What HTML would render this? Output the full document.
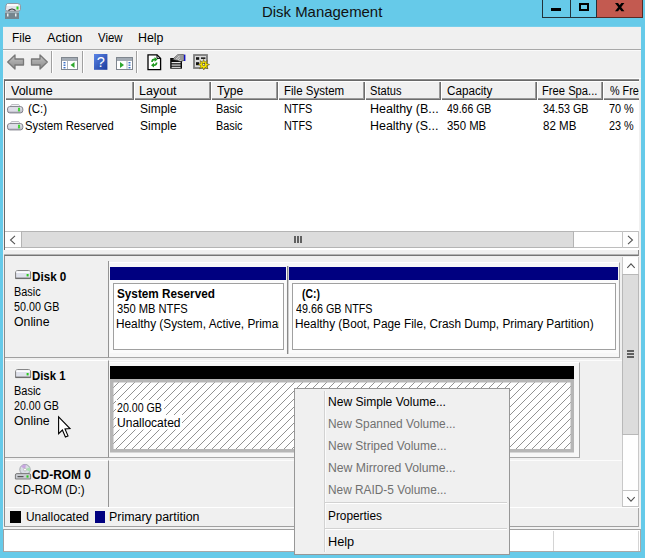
<!DOCTYPE html>
<html><head><meta charset="utf-8"><title>Disk Management</title>
<style>
*{box-sizing:border-box;margin:0;padding:0}
html,body{width:645px;height:558px;overflow:hidden;background:#66CAE9;}
body{position:relative;font-family:"Liberation Sans",sans-serif;font-size:12px;color:#000;}
.a{position:absolute}
.t{position:absolute;white-space:nowrap;transform-origin:0 0;}
.cap{position:absolute;top:0;height:18px;border-left:1px solid #22323a;border-bottom:1px solid #22323a}
.hc{position:absolute;top:81px;height:19px;background:#f0f0f0;border-top:1px solid #fff;border-left:1px solid #fff;box-shadow:inset -1px -1px 0 #6e6e6e,inset -2px -2px 0 #9a9a9a}
.lab{position:absolute;left:5px;width:104px;background:#f0f0f0;border-right:1px solid #949494;border-bottom:1px solid #a0a0a0;border-top:1px solid #fff}
.sep{position:absolute;top:51px;width:2px;height:22px;border-left:1px solid #a0a0a0;border-right:1px solid #fff}
svg{position:absolute;overflow:visible}
</style></head><body>
<!-- title icon -->
<svg style="left:5px;top:3px" width="17" height="17" viewBox="0 0 17 17">
 <rect x="0" y="8" width="14" height="8" fill="#75858e"/><rect x="0" y="8" width="14" height="2" fill="#9fb0b8"/>
 <rect x="2" y="10.5" width="1.5" height="3" fill="#e8eef0"/><rect x="10" y="10.5" width="1.5" height="3" fill="#e8eef0"/>
 <path d="M1 2.5 Q1 0.5 4 0.5 L12 0.5 Q15.5 0.5 15.5 2.5 L15.5 6.5 Q15.5 8 13 8 L3 8 Q0.5 8 0.5 6.5 Z" fill="#e4e4ec" stroke="#8a8a92" stroke-width="0.8"/>
 <rect x="2" y="1" width="11" height="2" fill="#fafafa"/>
 <path d="M3.5 7.5 Q7 4.5 10.5 7.5" fill="none" stroke="#222" stroke-width="1.2"/>
 <rect x="11.5" y="3.5" width="2" height="3" fill="#2fd41f"/>
</svg>
<div class="a" style="left:3px;top:26px;width:638px;height:1px;background:#78cfec"></div>
<!-- caption buttons -->
<div class="cap" style="left:542px;width:28px"></div>
<div class="cap" style="left:570px;width:27px"></div>
<div class="cap" style="left:596px;width:47px;background:#c35a50;border-right:1px solid #5a2a25;border-bottom-color:#5a2a25"></div>
<div class="a" style="left:551px;top:8px;width:10px;height:3px;background:#000"></div>
<div class="a" style="left:579px;top:3px;width:10px;height:8px;border:2px solid #000"></div>
<svg style="left:614.8px;top:2.8px" width="10" height="9" viewBox="0 0 10 9"><path d="M0 0 L3 0 L9.4 8.2 L6.4 8.2 Z M6.4 0 L9.4 0 L3 8.2 L0 8.2 Z" fill="#000"/></svg>

<!-- client -->
<div class="a" style="left:3px;top:27px;width:638px;height:525px;background:#f0f0f0"></div>
<div class="a" style="left:3px;top:49px;width:638px;height:1px;background:#a8a8a8"></div>
<div class="a" style="left:3px;top:50px;width:638px;height:1px;background:#fafafa"></div>
<div class="a" style="left:3px;top:78px;width:638px;height:1px;background:#fdfdfd"></div>

<!-- toolbar -->
<svg style="left:7px;top:54px" width="18" height="16" viewBox="0 0 18 16"><defs><linearGradient id="ag" x1="0" y1="0" x2="0" y2="1"><stop offset="0" stop-color="#c4c4c4"/><stop offset="1" stop-color="#8a8a8a"/></linearGradient></defs><path d="M0.7 8 L8 1 L8 5 L16.5 5 L16.5 11 L8 11 L8 15 Z" fill="url(#ag)" stroke="#787878" stroke-width="1.3" stroke-linejoin="round"/></svg>
<svg style="left:30px;top:54px" width="18" height="16" viewBox="0 0 18 16"><path d="M17.3 8 L10 1 L10 5 L1.5 5 L1.5 11 L10 11 L10 15 Z" fill="url(#ag)" stroke="#787878" stroke-width="1.3" stroke-linejoin="round"/></svg>
<div class="sep" style="left:51px"></div>
<svg style="left:61px;top:57px" width="18" height="13" viewBox="0 0 18 13">
 <rect x="0.5" y="0.5" width="16" height="12" fill="#fff" stroke="#7f868e"/><rect x="1" y="1" width="15" height="3" fill="#a3abb4"/><rect x="6" y="4" width="1" height="8" fill="#b0b6bd"/>
 <rect x="2.5" y="5" width="2" height="1.4" fill="#3a6fc4"/><rect x="2.5" y="7.5" width="2" height="1.4" fill="#3a6fc4"/><rect x="2.5" y="10" width="2" height="1.4" fill="#3a6fc4"/>
 <path d="M9.5 8 L13.5 5 L13.5 11 Z" fill="#2ea82e"/></svg>
<div class="sep" style="left:82px"></div>
<svg style="left:94px;top:54px" width="14" height="16" viewBox="0 0 14 16"><defs><linearGradient id="hg" x1="0" y1="0" x2="1" y2="1"><stop offset="0" stop-color="#5b85e6"/><stop offset="1" stop-color="#1a3a9c"/></linearGradient></defs>
 <rect x="0" y="0" width="13.4" height="15.8" fill="url(#hg)"/><text x="6.7" y="13" font-family="Liberation Sans,sans-serif" font-size="14.5" fill="#fff" text-anchor="middle">?</text></svg>
<svg style="left:116px;top:57px" width="18" height="13" viewBox="0 0 18 13">
 <rect x="0.5" y="0.5" width="16" height="12" fill="#fff" stroke="#7f868e"/><rect x="1" y="1" width="15" height="3" fill="#a3abb4"/><rect x="10.5" y="4" width="1" height="8" fill="#b0b6bd"/>
 <rect x="12.5" y="5" width="2" height="1.4" fill="#3a6fc4"/><rect x="12.5" y="7.5" width="2" height="1.4" fill="#3a6fc4"/><rect x="12.5" y="10" width="2" height="1.4" fill="#3a6fc4"/>
 <path d="M8 8 L4 5 L4 11 Z" fill="#2ea82e"/></svg>
<div class="sep" style="left:136px"></div>
<svg style="left:147px;top:54px" width="15" height="17" viewBox="0 0 15 17">
 <path d="M1 0.8 L10 0.8 L13.6 4.4 L13.6 15.6 L1 15.6 Z" fill="#fff" stroke="#000" stroke-width="1.3"/><path d="M10 0.8 L10 4.4 L13.6 4.4" fill="none" stroke="#000" stroke-width="1"/>
 <path d="M4.2 8 Q4.2 4.6 7.6 4.6 L7.6 3 L10.6 5.4 L7.6 7.8 L7.6 6.2 Q5.8 6.2 5.8 8 Z" fill="#1f9a1f"/>
 <path d="M10.4 8.6 Q10.4 12 7 12 L7 13.6 L4 11.2 L7 8.8 L7 10.4 Q8.8 10.4 8.8 8.6 Z" fill="#1f9a1f"/></svg>
<svg style="left:170px;top:54px" width="17" height="16" viewBox="0 0 17 16">
 <rect x="0.2" y="4" width="11.8" height="10.7" fill="#0a0a0a"/><rect x="1.6" y="8.1" width="9" height="1.1" fill="#fff"/><rect x="1.6" y="10.5" width="9" height="1.1" fill="#fff"/><rect x="1.6" y="12.8" width="9" height="1" fill="#fff"/>
 <path d="M2.6 5.6 L7.6 0.9 L13.6 0.7 L13.8 6.4 L10.2 7.6 L6.4 6.2 Z" fill="#d2d2d2" stroke="#2a2a2a" stroke-width="0.8"/>
 <path d="M5 5 L8.4 1.8 M6.8 5.8 L10 2.4 M8.8 6.6 L11.6 3.2" stroke="#6a6a6a" stroke-width="0.7" fill="none"/>
 <rect x="9.8" y="1.1" width="3.8" height="5" fill="#9a9a9a"/>
 <rect x="14" y="0.6" width="1.4" height="6.4" fill="#1414c4"/></svg>
<svg style="left:193px;top:54px" width="17" height="16" viewBox="0 0 17 16">
 <rect x="1" y="1" width="13" height="13" fill="#dcdcdc" stroke="#7c7c7c" stroke-width="1.8"/>
 <rect x="3" y="3.2" width="3.2" height="2.6" fill="#111"/><rect x="8" y="3.4" width="4.4" height="1.5" fill="#111"/><rect x="3" y="8.2" width="3.2" height="3" fill="#111"/>
 <path d="M10.6 5.4 L11.6 8.2 L14.4 6.6 L13.4 9.4 L16.6 10.6 L13.6 11.8 L15 14.8 L12 13.4 L10.8 16 L9.6 13.4 L6.6 14.8 L8 11.8 L5.2 10.6 L8 9.4 L7 6.6 L9.6 8.2 Z" fill="#f7e600" stroke="#4a4200" stroke-width="0.5"/>
 <rect x="9.8" y="9.6" width="2" height="2" fill="#fffbd0" stroke="#222" stroke-width="0.5"/></svg>

<!-- list view -->
<div class="a" style="left:4px;top:79px;width:635px;height:171px;background:#fff;border-left:1px solid #696969;border-top:1px solid #8c8c8c"></div>
<div class="a" style="left:5px;top:80px;width:634px;height:1px;background:#696969"></div>
<div class="hc" style="left:5px;width:129px"></div>
<div class="hc" style="left:134px;width:77px"></div>
<div class="hc" style="left:211px;width:67px"></div>
<div class="hc" style="left:278px;width:87px"></div>
<div class="hc" style="left:365px;width:76px"></div>
<div class="hc" style="left:441px;width:96px"></div>
<div class="hc" style="left:537px;width:66px"></div>
<div class="hc" style="left:603px;width:36px;box-shadow:inset 0 -1px 0 #6e6e6e,inset 0 -2px 0 #9a9a9a"></div>
<!-- drive icons in list -->
<svg width="0" height="0" style="left:0;top:0"><defs><linearGradient id="dg" x1="0" y1="0" x2="0" y2="1"><stop offset="0" stop-color="#ececf2"/><stop offset="1" stop-color="#b8b8c4"/></linearGradient></defs></svg>
<svg style="left:7px;top:104px" width="16.3" height="10" viewBox="0 0 17 10" preserveAspectRatio="none"><path d="M3 3 L4.8 0.5 L12.2 0.5 L14 3 Z" fill="#f1f1f5" stroke="#a4a4ac" stroke-width="0.7"/><rect x="0.5" y="2.6" width="16" height="6.3" rx="2.4" fill="url(#dg)" stroke="#7e7e88" stroke-width="1"/><rect x="2.4" y="3.6" width="8.6" height="3.6" fill="#dedee8"/><rect x="11.5" y="3.8" width="2.1" height="3.5" fill="#25c61b"/><rect x="12.1" y="4.4" width="0.9" height="2.3" fill="#7cf070"/></svg>
<svg style="left:7px;top:121px" width="16.3" height="10" viewBox="0 0 17 10" preserveAspectRatio="none"><path d="M3 3 L4.8 0.5 L12.2 0.5 L14 3 Z" fill="#f1f1f5" stroke="#a4a4ac" stroke-width="0.7"/><rect x="0.5" y="2.6" width="16" height="6.3" rx="2.4" fill="url(#dg)" stroke="#7e7e88" stroke-width="1"/><rect x="2.4" y="3.6" width="8.6" height="3.6" fill="#dedee8"/><rect x="11.5" y="3.8" width="2.1" height="3.5" fill="#25c61b"/><rect x="12.1" y="4.4" width="0.9" height="2.3" fill="#7cf070"/></svg>
<!-- h scrollbar -->
<div class="a" style="left:5px;top:231px;width:634px;height:17px;background:#fefefe;border-top:1px solid #bdbdbd;border-bottom:1px solid #bdbdbd"></div>
<div class="a" style="left:21px;top:231px;width:553px;height:17px;background:#dcdcdc;border:1px solid #b4b4b4"></div>
<div class="a" style="left:622px;top:231px;width:1px;height:17px;background:#c4c4c4"></div><div class="a" style="left:638px;top:231px;width:1px;height:17px;background:#c4c4c4"></div>
<svg style="left:9px;top:235px" width="8" height="10" viewBox="0 0 8 10"><path d="M6 0.8 L1.5 5 L6 9.2" fill="none" stroke="#505050" stroke-width="1.05"/></svg>
<svg style="left:626px;top:235px" width="8" height="10" viewBox="0 0 8 10"><path d="M2 0.8 L6.5 5 L2 9.2" fill="none" stroke="#505050" stroke-width="1.05"/></svg>
<div class="a" style="left:294px;top:236px;width:2px;height:7px;background:#606060;box-shadow:3px 0 0 #606060,6px 0 0 #606060"></div>

<!-- splitter + bottom pane -->
<div class="a" style="left:4px;top:250px;width:635px;height:5px;background:#f0f0f0"></div>
<div class="a" style="left:4px;top:255px;width:635px;height:272px;background:#f0f0f0;border-left:1px solid #8c8c8c;border-top:1px solid #757575"></div>
<div class="a" style="left:4px;top:254px;width:635px;height:1px;background:#b4b4b4"></div>
<div class="a" style="left:638px;top:250px;width:1px;height:6px;background:#8a8a8a"></div>

<!-- rows -->
<div class="lab" style="top:261px;height:97px;border-top:none"></div>
<div class="lab" style="top:360px;height:98px"></div>
<div class="lab" style="top:460px;height:48px;border-bottom:none"></div>
<div class="a" style="left:109px;top:360px;width:513px;height:1px;background:#fcfcfc"></div>
<div class="a" style="left:109px;top:460px;width:513px;height:1px;background:#fcfcfc"></div>

<!-- disk 0 partitions -->
<div class="a" style="left:109px;top:262px;width:511px;height:96px;background:#f7f7f7;border-right:1px solid #a8a8a8;border-bottom:1px solid #a8a8a8;border-top:1px solid #fff"></div>
<div class="a" style="left:110px;top:267px;width:176px;height:13px;background:#000080"></div>
<div class="a" style="left:110px;top:280px;width:176px;height:73px;background:#fbfbfb"></div>
<div class="a" style="left:113px;top:283px;width:171px;height:67px;background:#fff;border:1px solid #a0a0a0"></div>
<div class="a" style="left:287px;top:266px;width:1px;height:88px;background:#8a8a8a"></div><div class="a" style="left:288px;top:266px;width:1px;height:88px;background:#d0d0d0"></div>
<div class="a" style="left:289px;top:267px;width:329px;height:13px;background:#000080"></div>
<div class="a" style="left:289px;top:280px;width:329px;height:73px;background:#fbfbfb"></div>
<div class="a" style="left:292px;top:283px;width:324px;height:67px;background:#fff;border:1px solid #a0a0a0"></div>

<!-- disk 1 -->
<div class="a" style="left:109px;top:362px;width:471px;height:96px;background:#f7f7f7;border-right:1px solid #a8a8a8;border-bottom:1px solid #a8a8a8;border-top:1px solid #fff"></div>
<div class="a" style="left:110px;top:366px;width:464px;height:13px;background:#000"></div>
<svg style="left:110px;top:379px" width="464" height="73.5" viewBox="0 0 464 73.5"><defs><pattern id="hz" width="8" height="8" patternUnits="userSpaceOnUse" x="1" y="3"><rect width="8" height="8" fill="#fff"/><path d="M-1 9 L9 -1 M-1 1 L1 -1 M7 9 L9 7" stroke="#7e7e7e" stroke-width="0.85" fill="none"/></pattern></defs><rect x="0" y="0" width="464" height="73.5" fill="#b6b6b6"/><rect x="3.5" y="3.5" width="457" height="66.5" fill="url(#hz)"/>
<rect x="6" y="21" width="48" height="15" fill="#fff"/><rect x="6" y="36" width="66" height="14.5" fill="#fff"/></svg>

<!-- legend -->
<div class="a" style="left:5px;top:507px;width:634px;height:20px;background:#f0f0f0;border-top:1px solid #fff"></div>
<div class="a" style="left:10px;top:511px;width:11px;height:12px;background:#000"></div>
<div class="a" style="left:94.5px;top:511px;width:10.8px;height:12px;background:#000080"></div>

<!-- v scrollbar -->
<div class="a" style="left:622px;top:257px;width:17px;height:250px;background:#fefefe;border-left:1px solid #c8c8c8;border-right:1px solid #c8c8c8"></div>
<div class="a" style="left:622px;top:274px;width:17px;height:161px;background:#dcdcdc;border:1px solid #b8b8b8"></div>
<div class="a" style="left:622px;top:490px;width:17px;height:17px;border:1px solid #c4c4c4"></div>
<svg style="left:626px;top:262px" width="10" height="8" viewBox="0 0 10 8"><path d="M1.3 5.8 L5 1.8 L8.7 5.8" fill="none" stroke="#505050" stroke-width="1.05"/></svg>
<svg style="left:626px;top:495px" width="10" height="8" viewBox="0 0 10 8"><path d="M1.3 2.2 L5 6.2 L8.7 2.2" fill="none" stroke="#505050" stroke-width="1.05"/></svg>
<div class="a" style="left:627px;top:350px;width:7px;height:2px;background:#606060;box-shadow:0 3px 0 #606060,0 6px 0 #606060"></div>

<!-- bottom border + status bar -->
<div class="a" style="left:4px;top:526px;width:635px;height:1px;background:#a0a0a0"></div>
<div class="a" style="left:638px;top:508px;width:1px;height:19px;background:#a8a8a8"></div>
<div class="a" style="left:4px;top:527px;width:636px;height:2px;background:#f3f3f3"></div>
<div class="a" style="left:3px;top:529px;width:638px;height:23px;background:#fff;border-left:1px solid #a0a0a0;border-top:1px solid #a0a0a0;border-bottom:1px solid #a8a8a8;border-right:1px solid #a8a8a8"></div>
<div class="a" style="left:553px;top:531px;width:1px;height:20px;background:#d4d4d4"></div>
<div class="a" style="left:638px;top:531px;width:1px;height:20px;background:#d4d4d4"></div>

<svg style="left:15px;top:270px" width="17" height="10" viewBox="0 0 17 10"><path d="M2.5 0.6 L13.5 0.6 Q15.6 0.6 15.6 3 L15.6 8.6 L0.6 8.6 L0.6 3 Q0.6 0.6 2.5 0.6 Z" fill="#dfe2ec" stroke="#7c7c7c" stroke-width="1"/><rect x="1.2" y="1.2" width="13.6" height="1.8" fill="#fbfbfd"/><rect x="0.6" y="7.6" width="15" height="1.4" fill="#6e6e6e"/><rect x="11.6" y="4" width="2" height="2.4" fill="#2cc91f"/></svg>
<svg style="left:15px;top:369px" width="17" height="10" viewBox="0 0 17 10"><path d="M2.5 0.6 L13.5 0.6 Q15.6 0.6 15.6 3 L15.6 8.6 L0.6 8.6 L0.6 3 Q0.6 0.6 2.5 0.6 Z" fill="#dfe2ec" stroke="#7c7c7c" stroke-width="1"/><rect x="1.2" y="1.2" width="13.6" height="1.8" fill="#fbfbfd"/><rect x="0.6" y="7.6" width="15" height="1.4" fill="#6e6e6e"/><rect x="11.6" y="4" width="2" height="2.4" fill="#2cc91f"/></svg>
<svg style="left:15px;top:464px" width="17" height="16" viewBox="0 0 17 16"><circle cx="10" cy="5.6" r="5.2" fill="#d9dde4" stroke="#8d939c" stroke-width="0.8"/><path d="M10 5.6 L6 2.4 A5.2 5.2 0 0 1 11 0.5 Z" fill="#c9a6e0"/><path d="M10 5.6 L14.6 3.2 A5.2 5.2 0 0 1 14.8 7.6 Z" fill="#a9e0b0"/><circle cx="10" cy="5.6" r="1.4" fill="#fff" stroke="#999" stroke-width="0.5"/><path d="M2 9.6 L14 9.6 Q15.6 9.6 15.6 11 L15.6 15 L0.4 15 L0.4 11 Q0.4 9.6 2 9.6 Z" fill="#c9ccd2" stroke="#6f6f6f" stroke-width="0.9"/><rect x="2.5" y="12" width="6" height="1.2" fill="#555"/><rect x="11.5" y="11.4" width="2" height="2.2" fill="#2cc91f"/></svg>
<div class="t" style="left:261.63px;top:3.3px;font-size:15px;line-height:17px;color:#111;transform:scaleX(0.9953);">Disk Management</div>
<div class="t" style="left:12.46px;top:30.7px;font-size:12px;line-height:14px;color:#000;transform:scaleX(0.9909);">File</div>
<div class="t" style="left:47.20px;top:30.7px;font-size:12px;line-height:14px;color:#000;transform:scaleX(1.0590);">Action</div>
<div class="t" style="left:98.15px;top:30.7px;font-size:12px;line-height:14px;color:#000;transform:scaleX(0.9505);">View</div>
<div class="t" style="left:138.32px;top:30.7px;font-size:12px;line-height:14px;color:#000;transform:scaleX(1.0320);">Help</div>
<div class="t" style="left:10.85px;top:83.9px;font-size:12px;line-height:14px;color:#000;transform:scaleX(1.0418);">Volume</div>
<div class="t" style="left:139.01px;top:83.9px;font-size:12px;line-height:14px;color:#000;transform:scaleX(1.0430);">Layout</div>
<div class="t" style="left:216.55px;top:83.9px;font-size:12px;line-height:14px;color:#000;transform:scaleX(1.0063);">Type</div>
<div class="t" style="left:283.59px;top:83.9px;font-size:12px;line-height:14px;color:#000;transform:scaleX(0.9593);">File System</div>
<div class="t" style="left:370.24px;top:83.9px;font-size:12px;line-height:14px;color:#000;transform:scaleX(0.9239);">Status</div>
<div class="t" style="left:446.62px;top:83.9px;font-size:12px;line-height:14px;color:#000;transform:scaleX(0.9721);">Capacity</div>
<div class="t" style="left:542.11px;top:83.9px;font-size:12px;line-height:14px;color:#000;transform:scaleX(0.9332);">Free Spa...</div>
<div style="left:609.54px;top:83.9px;width:29.1px;height:14px;overflow:hidden;position:absolute"><div class="t" style="left:0;top:0;font-size:12px;line-height:14px;color:#000;transform:scaleX(0.9009);">% Free</div></div>
<div class="t" style="left:28.03px;top:101.7px;font-size:12px;line-height:14px;color:#000;transform:scaleX(0.9572);">(C:)</div>
<div class="t" style="left:139.50px;top:101.7px;font-size:12px;line-height:14px;color:#000;transform:scaleX(0.9984);">Simple</div>
<div class="t" style="left:215.94px;top:101.7px;font-size:12px;line-height:14px;color:#000;transform:scaleX(0.9041);">Basic</div>
<div class="t" style="left:283.64px;top:101.7px;font-size:12px;line-height:14px;color:#000;transform:scaleX(0.9037);">NTFS</div>
<div class="t" style="left:369.71px;top:101.7px;font-size:12px;line-height:14px;color:#000;transform:scaleX(1.0408);">Healthy (B...</div>
<div class="t" style="left:446.98px;top:101.7px;font-size:12px;line-height:14px;color:#000;transform:scaleX(0.8747);">49.66 GB</div>
<div class="t" style="left:542.60px;top:101.7px;font-size:12px;line-height:14px;color:#000;transform:scaleX(0.8963);">34.53 GB</div>
<div class="t" style="left:609.46px;top:101.7px;font-size:12px;line-height:14px;color:#000;transform:scaleX(0.9039);">70 %</div>
<div class="t" style="left:24.83px;top:118.7px;font-size:12px;line-height:14px;color:#000;transform:scaleX(0.9382);">System Reserved</div>
<div class="t" style="left:139.50px;top:118.7px;font-size:12px;line-height:14px;color:#000;transform:scaleX(0.9984);">Simple</div>
<div class="t" style="left:215.94px;top:118.7px;font-size:12px;line-height:14px;color:#000;transform:scaleX(0.9041);">Basic</div>
<div class="t" style="left:283.64px;top:118.7px;font-size:12px;line-height:14px;color:#000;transform:scaleX(0.9037);">NTFS</div>
<div class="t" style="left:369.72px;top:118.7px;font-size:12px;line-height:14px;color:#000;transform:scaleX(1.0361);">Healthy (S...</div>
<div class="t" style="left:446.77px;top:118.7px;font-size:12px;line-height:14px;color:#000;transform:scaleX(0.9479);">350 MB</div>
<div class="t" style="left:542.52px;top:118.7px;font-size:12px;line-height:14px;color:#000;transform:scaleX(0.9619);">82 MB</div>
<div class="t" style="left:609.46px;top:118.7px;font-size:12px;line-height:14px;color:#000;transform:scaleX(0.9039);">23 %</div>
<div class="t" style="left:31.82px;top:269.5px;font-size:12px;line-height:14px;color:#000;transform:scaleX(0.9712);font-weight:bold;">Disk 0</div>
<div class="t" style="left:13.64px;top:284.7px;font-size:12px;line-height:14px;color:#000;transform:scaleX(0.9077);">Basic</div>
<div class="t" style="left:14.10px;top:299.6px;font-size:12px;line-height:14px;color:#000;transform:scaleX(0.8943);">50.00 GB</div>
<div class="t" style="left:13.94px;top:314.6px;font-size:12px;line-height:14px;color:#000;transform:scaleX(1.0234);">Online</div>
<div class="t" style="left:116.71px;top:286.9px;font-size:12px;line-height:14px;color:#000;transform:scaleX(0.9780);font-weight:bold;">System Reserved</div>
<div class="t" style="left:116.58px;top:301.7px;font-size:12px;line-height:14px;color:#000;transform:scaleX(0.9299);">350 MB NTFS</div>
<div style="left:116.06px;top:316.7px;width:163.4px;height:14px;overflow:hidden;position:absolute"><div class="t" style="left:0;top:0;font-size:12px;line-height:14px;color:#000;transform:scaleX(0.9851);">Healthy (System, Active, Primary Partition)</div></div>
<div class="t" style="left:302.32px;top:286.7px;font-size:12px;line-height:14px;color:#000;transform:scaleX(0.8663);font-weight:bold;">(C:)</div>
<div class="t" style="left:295.78px;top:301.7px;font-size:12px;line-height:14px;color:#000;transform:scaleX(0.8959);">49.66 GB NTFS</div>
<div class="t" style="left:295.07px;top:316.7px;font-size:12px;line-height:14px;color:#000;transform:scaleX(0.9841);">Healthy (Boot, Page File, Crash Dump, Primary Partition)</div>
<div class="t" style="left:31.84px;top:368.5px;font-size:12px;line-height:14px;color:#000;transform:scaleX(0.9465);font-weight:bold;">Disk 1</div>
<div class="t" style="left:13.63px;top:383.7px;font-size:12px;line-height:14px;color:#000;transform:scaleX(0.9148);">Basic</div>
<div class="t" style="left:13.97px;top:398.9px;font-size:12px;line-height:14px;color:#000;transform:scaleX(0.8869);">20.00 GB</div>
<div class="t" style="left:13.94px;top:413.8px;font-size:12px;line-height:14px;color:#000;transform:scaleX(1.0264);">Online</div>
<div class="t" style="left:117.37px;top:400.8px;font-size:12px;line-height:14px;color:#000;transform:scaleX(0.8869);">20.00 GB</div>
<div class="t" style="left:117.00px;top:416.0px;font-size:12px;line-height:14px;color:#000;transform:scaleX(1.0024);">Unallocated</div>
<div class="t" style="left:31.95px;top:467.7px;font-size:12px;line-height:14px;color:#000;transform:scaleX(0.9930);font-weight:bold;">CD-ROM 0</div>
<div class="t" style="left:13.72px;top:483.0px;font-size:12px;line-height:14px;color:#000;transform:scaleX(0.9712);">CD-ROM (D:)</div>
<div class="t" style="left:25.61px;top:509.9px;font-size:12px;line-height:14px;color:#000;transform:scaleX(0.9927);">Unallocated</div>
<div class="t" style="left:108.82px;top:509.9px;font-size:12px;line-height:14px;color:#000;transform:scaleX(1.0358);">Primary partition</div>

<!-- cursor -->
<svg style="left:58px;top:415.7px" width="14" height="23" viewBox="0 0 14 23"><path d="M0.6 0.8 L0.6 17.6 L4.4 14 L7.4 21 L10 19.9 L7 13 L12 12.6 Z" fill="#fff" stroke="#000" stroke-width="1.1" stroke-linejoin="miter"/></svg>

<!-- context menu -->
<div class="a" style="left:294px;top:388px;width:216px;height:167px;background:#f0f0f0;border:1px solid #979797"></div>
<div class="a" style="left:324px;top:391px;width:2px;height:161px;border-left:1px solid #d2d2d2;border-right:1px solid #fbfbfb"></div>
<div class="a" style="left:325px;top:502px;width:182px;height:2px;border-top:1px solid #d2d2d2;border-bottom:1px solid #fff"></div>
<div class="a" style="left:325px;top:528px;width:182px;height:2px;border-top:1px solid #d2d2d2;border-bottom:1px solid #fff"></div>
<div class="t" style="left:328.15px;top:394.7px;font-size:12px;line-height:14px;color:#000;transform:scaleX(1.0048);">New Simple Volume...</div>
<div class="t" style="left:328.16px;top:416.6px;font-size:12px;line-height:14px;color:#707070;transform:scaleX(0.9912);">New Spanned Volume...</div>
<div class="t" style="left:328.15px;top:438.6px;font-size:12px;line-height:14px;color:#707070;transform:scaleX(0.9992);">New Striped Volume...</div>
<div class="t" style="left:328.13px;top:460.6px;font-size:12px;line-height:14px;color:#707070;transform:scaleX(1.0183);">New Mirrored Volume...</div>
<div class="t" style="left:328.16px;top:482.7px;font-size:12px;line-height:14px;color:#707070;transform:scaleX(0.9881);">New RAID-5 Volume...</div>
<div class="t" style="left:328.16px;top:508.9px;font-size:12px;line-height:14px;color:#000;transform:scaleX(0.9861);">Properties</div>
<div class="t" style="left:328.09px;top:535.0px;font-size:12px;line-height:14px;color:#000;transform:scaleX(1.0621);">Help</div>
</body></html>
